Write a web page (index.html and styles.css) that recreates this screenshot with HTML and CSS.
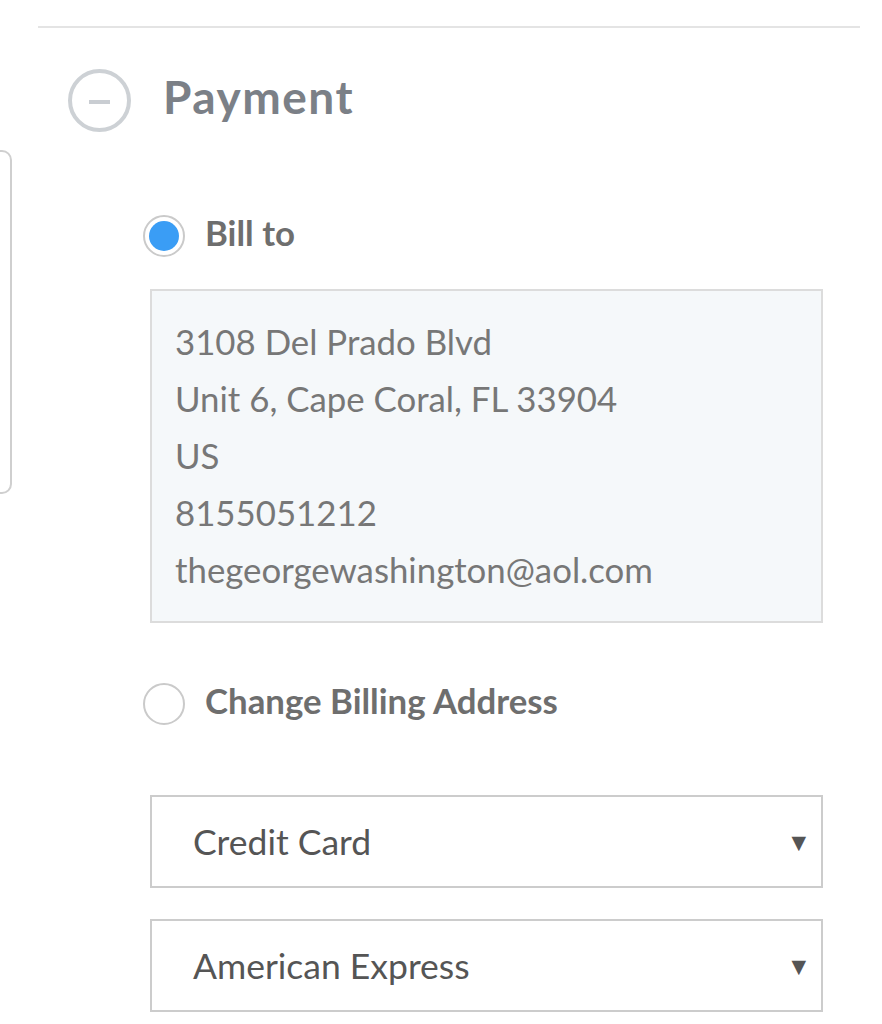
FILE: index.html
```html
<!DOCTYPE html>
<html lang="en">
<head>
<meta charset="utf-8">
<title>Payment</title>
<link rel="stylesheet" href="styles.css">
</head>
<body>
<div class="side-panel"></div>
<main class="page">
  <hr class="divider">
  <header class="section-head">
    <span class="collapse-icon"><span class="minus"></span></span>
    <h2 class="section-title">Payment</h2>
  </header>
  <section class="section-body">
    <label class="radio-row radio-first">
      <span class="radio checked"><span class="dot"></span></span>
      <span class="radio-label">Bill to</span>
    </label>
    <div class="address">
      <div>3108 Del Prado Blvd</div>
      <div>Unit 6, Cape Coral, FL 33904</div>
      <div>US</div>
      <div>8155051212</div>
      <div>thegeorgewashington@aol.com</div>
    </div>
    <label class="radio-row radio-second">
      <span class="radio"></span>
      <span class="radio-label">Change Billing Address</span>
    </label>
    <div class="select select-first">
      <span class="select-value">Credit Card</span>
      <span class="caret">&#9660;</span>
    </div>
    <div class="select select-second">
      <span class="select-value">American Express</span>
      <span class="caret">&#9660;</span>
    </div>
  </section>
</main>
</body>
</html>
```

FILE: styles.css
```css
* { box-sizing: border-box; }
html, body {
  margin: 0;
  padding: 0;
  background: #ffffff;
  font-family: Lato, "Open Sans", Arial, sans-serif;
}
body {
  position: relative;
  width: 882px;
  height: 1024px;
  overflow: hidden;
}
.side-panel {
  position: absolute;
  left: -300px;
  top: 150px;
  width: 312px;
  height: 344px;
  border: 2px solid #cfcfcf;
  border-radius: 10px;
}
.page {
  padding: 26px 22px 0 38px;
}
.divider {
  margin: 0;
  border: 0;
  height: 2px;
  background: #e4e4e4;
}
.section-head {
  display: flex;
  align-items: center;
  margin: 41px 0 0 30px;
  height: 63px;
}
.collapse-icon {
  width: 63px;
  height: 63px;
  border: 4px solid #cdd1d5;
  border-radius: 50%;
  display: flex;
  align-items: center;
  justify-content: center;
  flex: none;
}
.minus {
  width: 21px;
  height: 4px;
  background: #c9cdd2;
  margin-top: 3px;
}
.section-title {
  margin: 0 0 8px 32px;
  font-size: 46px;
  font-weight: 700;
  color: #7b8087;
  letter-spacing: 1.5px;
  line-height: 1;
}
.section-body {
  margin: 0 37px 0 105px;
}
.radio-row {
  display: flex;
  align-items: center;
  height: 42px;
}
.radio-first { margin-top: 83px; }
.radio-second { margin-top: 60px; }
.radio {
  width: 42px;
  height: 42px;
  border: 2px solid #cacaca;
  border-radius: 50%;
  display: flex;
  align-items: center;
  justify-content: center;
  flex: none;
  background: #fff;
}
.dot {
  width: 30px;
  height: 30px;
  border-radius: 50%;
  background: #3a9df5;
}
.radio-label {
  margin: 0 0 5px 20px;
  font-size: 34.8px;
  font-weight: 700;
  color: #6e6e6e;
  line-height: 1;
}
.address {
  margin: 32px 0 0 7px;
  height: 334px;
  border: 2px solid #dcdcdc;
  background: #f5f8fa;
  padding: 22px 20px 0 23px;
  font-size: 34.8px;
  line-height: 57px;
  color: #777777;
}
.select {
  margin-left: 7px;
  height: 93px;
  border: 2px solid #cccccc;
  display: flex;
  align-items: center;
  justify-content: space-between;
  padding: 0 15px 0 41px;
  color: #555555;
}
.select-first { margin-top: 70px; }
.select-second { margin-top: 31px; }
.select-value {
  font-size: 35.5px;
}
.caret {
  font-size: 19px;
  color: #555;
  font-family: "DejaVu Sans", sans-serif;
}
```
